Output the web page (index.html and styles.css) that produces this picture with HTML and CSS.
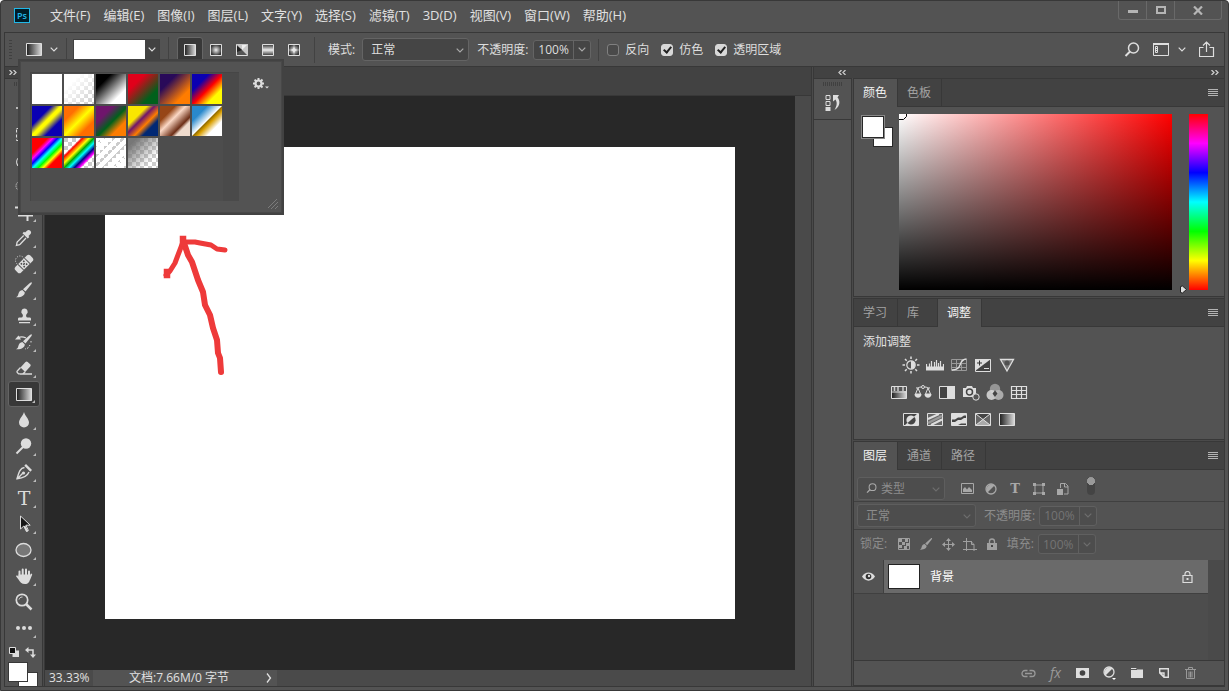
FILE: index.html
```html
<!DOCTYPE html>
<html lang="zh-CN">
<head>
<meta charset="utf-8">
<title>Photoshop</title>
<link rel="stylesheet" href="styles.css">
</head>
<body>
<svg class="defs" aria-hidden="true">
  <defs>
    <linearGradient id="g-h"><stop offset="0" stop-color="#1c1c1c"/><stop offset="1" stop-color="#dcdcdc"/></linearGradient>
    <radialGradient id="g-r"><stop offset="0" stop-color="#f0f0f0"/><stop offset="1" stop-color="#3a3a3a"/></radialGradient>
    <linearGradient id="g-m" x2="0" y2="1"><stop offset="0" stop-color="#333"/><stop offset=".5" stop-color="#eee"/><stop offset="1" stop-color="#333"/></linearGradient>
    <symbol id="chev" viewBox="0 0 8 5"><path d="M.7.7 4 4 7.3.7" fill="none" stroke="currentColor" stroke-width="1.2"/></symbol>
    <symbol id="grad" viewBox="0 0 16 13"><path d="M.5.5h15v12H.5z" fill="url(#g-h)" stroke="#dedede"/></symbol>
    <symbol id="menu" viewBox="0 0 10 8"><path d="M0 .5h10M0 2.5h10M0 4.5h10M0 6.5h10" stroke="currentColor"/></symbol>
    <symbol id="right2" viewBox="0 0 8 5"><path d="m.5 0 2.5 2.500L.5 5M4.500 0 7 2.500 4.500 5" fill="none" stroke="currentColor" stroke-width="1.300"/></symbol>
    <symbol id="halfc" viewBox="0 0 12 12"><circle cx="6" cy="6" r="5" fill="none" stroke="currentColor" stroke-width="1.300"/><path d="M2.500 9.500a5 5 0 0 1 7-7z" fill="currentColor"/></symbol>
    <symbol id="search" viewBox="0 0 16 16"><circle cx="9.500" cy="6" r="5" fill="none" stroke="currentColor" stroke-width="1.500"/><path d="M6 9.500 1.500 14" stroke="currentColor" stroke-width="2"/></symbol>
    <symbol id="brush" viewBox="0 0 18 18"><path d="M16.500 1.200c.6.300.3 1.200-.2 2L10.500 10.500 8 8.300 14 2.800c1-.9 1.800-1.700 2.500-1.600zM7.300 9l2.400 2.200c.5 3-3.500 5.500-8.700 5 2-.7 2-2 2.600-4 .6-1.700 1.900-2.900 3.700-3.200z" fill="currentColor"/></symbol>
  </defs>
</svg>
<div class="app">
  <header class="menubar">
    <span class="logo">Ps</span>
    <nav class="menus">
      <a href="#">文件(F)</a><a href="#">编辑(E)</a><a href="#">图像(I)</a><a href="#">图层(L)</a><a href="#">文字(Y)</a><a href="#">选择(S)</a><a href="#">滤镜(T)</a><a href="#">3D(D)</a><a href="#">视图(V)</a><a href="#">窗口(W)</a><a href="#">帮助(H)</a>
    </nav>
    <div class="winbtns">
      <button aria-label="最小化"><svg width="10" height="8"><path d="M0 4h10v3H0z" fill="#b5b5b5"/></svg></button>
      <button aria-label="最大化"><svg width="10" height="8"><path d="M1 1h8v6H1z" fill="none" stroke="#b5b5b5" stroke-width="2"/></svg></button>
      <button class="close" aria-label="关闭"><svg width="10" height="9"><path d="m1 .5 8 8m0-8-8 8" stroke="#b5b5b5" stroke-width="2.200"/></svg></button>
    </div>
  </header>

  <div class="frame">
  <div class="options">
    <span class="grip-v"></span>
    <button class="preset" aria-label="工具预设"><svg width="16" height="13"><use href="#grad"/></svg><svg width="8" height="5"><use href="#chev"/></svg></button>
    <div class="preview"><button class="bar" aria-label="编辑渐变"></button><button class="drop" aria-label="渐变拾色器"><svg width="8" height="5"><use href="#chev"/></svg></button></div>
    <div class="styles">
      <button class="on" aria-label="线性渐变"><svg width="12" height="12"><path d="M.5.5h11v11H.5z" fill="url(#g-h)" stroke="#dedede"/></svg></button>
      <button aria-label="径向渐变"><svg width="12" height="12"><path d="M.5.5h11v11H.5z" fill="url(#g-r)" stroke="#dedede"/></svg></button>
      <button aria-label="角度渐变"><svg width="12" height="12"><path d="M.5.5h11v11H.5z" fill="#555" stroke="#dedede"/><path d="M0 0h12v12z" fill="#c8c8c8"/><path d="M6 6V1h5z" fill="#eee"/><path d="M1 2v6l5-2z" fill="#222"/></svg></button>
      <button aria-label="对称渐变"><svg width="12" height="12"><path d="M.5.5h11v11H.5z" fill="url(#g-m)" stroke="#dedede"/></svg></button>
      <button aria-label="菱形渐变"><svg width="12" height="12"><path d="M.5.5h11v11H.5z" fill="url(#g-r)" stroke="#dedede"/><path d="M6 2.500 7 5l2.500 1L7 7 6 9.500 5 7 2.500 6 5 5z" fill="#f0f0f0"/><path d="M6 1v10M1 6h10" stroke="#ddd" opacity=".5"/></svg></button>
    </div>
    <label class="field mode">模式: <span class="select"><select><option>正常</option></select><svg width="8" height="5"><use href="#chev"/></svg></span></label>
    <label class="field opacity">不透明度: <span class="num"><input type="text" value="100%"><svg width="8" height="5"><use href="#chev"/></svg></span></label>
    <div class="checks">
      <label><input type="checkbox">反向</label>
      <label><input type="checkbox" checked>仿色</label>
      <label><input type="checkbox" checked>透明区域</label>
    </div>
    <div class="opt-right">
      <button aria-label="搜索"><svg width="16" height="16"><use href="#search"/></svg></button>
      <button class="ws" aria-label="工作区"><svg width="17" height="13"><path d="M.5.500h15v12H.500z" fill="none" stroke="currentColor"/><path d="M0 1h16" stroke="currentColor" stroke-width="2"/><path d="M2.500 3.500h2v6h-2zM2.500 5.500h2M2.500 7.500h2" fill="none" stroke="currentColor"/></svg><svg width="8" height="5"><use href="#chev"/></svg></button>
      <button aria-label="共享"><svg width="16" height="17"><path d="M4.500 6.500H.500v9h14v-9h-4M7.500 11V1.500M4 4.500l3.500-3.500L11 4.500" fill="none" stroke="currentColor" stroke-width="1.200"/></svg></button>
    </div>
  </div>

  <main class="main">
    <aside class="tools">
      <div class="strip"><svg width="8" height="5"><use href="#right2"/></svg></div>
      <div class="grip-h"></div>
      <button aria-label="移动"><svg width="18" height="18"><path d="M9 1v16M1 9h16" stroke="currentColor" stroke-width="1.500"/></svg></button>
      <button aria-label="选框"><svg width="18" height="18"><path d="M1.500 3.500h15v12h-15z" fill="none" stroke="currentColor" stroke-dasharray="3 2"/></svg></button>
      <button aria-label="套索"><svg width="18" height="18"><path d="M3 15c-4-5 1-12 8-11s6 9-2 8-7 2-5 4" fill="none" stroke="currentColor"/></svg></button>
      <button aria-label="快速选择"><svg width="18" height="18"><circle cx="6" cy="9" r="5" fill="none" stroke="currentColor" stroke-dasharray="1 1"/></svg></button>
      <button class="fly" aria-label="裁剪"><svg width="18" height="18"><path d="M4 0v12.500h14M0 4.500h12.500V18" fill="none" stroke="currentColor" stroke-width="2"/></svg></button>
      <button class="fly" aria-label="吸管"><svg width="18" height="18"><path d="M12 1.700c2-2 5.500 1 3.500 3.200L13.500 7l.800.900-1.600 1.500-5.200-5.200L9 2.800l1 .8z" fill="currentColor"/><path d="M8.700 6.500 2.600 12.600C1.500 13.600 2 15 1.500 16.300c1.200-.3 2.500.1 3.600-1L11 9" fill="none" stroke="currentColor" stroke-width="1.300"/></svg></button>
      <button class="fly" aria-label="修复画笔"><svg width="20" height="20"><circle cx="6" cy="6.500" r="4.500" fill="none" stroke="currentColor" stroke-dasharray="1 1.500"/><g transform="rotate(-45 10 10)"><rect x="-.500" y="6" width="21" height="8" rx="2.500" fill="currentColor"/><path d="M5.500 6v8M14.500 6v8" stroke="#535353"/><path d="M7.500 8h1.500M11 8h1.500M7.500 12h1.500M11 12h1.500M9 10h2" stroke="#444" stroke-width="1.500"/></g></svg></button>
      <button class="fly" aria-label="画笔"><svg width="18" height="18"><use href="#brush"/></svg></button>
      <button class="fly" aria-label="仿制图章"><svg width="18" height="18"><path d="M9.500 1.500a3.200 3.200 0 0 1 2 5.700c-.9 1-.3 3.300 1 3.300h2c1 0 1.500.5 1.500 1.500v1.500H3V12c0-1 .5-1.500 1.500-1.500h2c1.300 0 1.900-2.300 1-3.300a3.200 3.200 0 0 1 2-5.700zM4 15h11v1.300H4z" fill="currentColor"/></svg></button>
      <button class="fly" aria-label="历史记录画笔"><svg width="18" height="18"><use href="#brush"/><path d="M3 5c3-2 6-1 8 0" stroke="currentColor" stroke-width="1.300" fill="none"/><path d="M0 6.500 3.500 2.500 6 6.500z" fill="currentColor"/><path d="M16 8v2M15 12l-2 3-3 1" stroke="currentColor" fill="none" stroke-dasharray="1.500 1.500"/></svg></button>
      <button class="fly" aria-label="橡皮擦"><svg width="18" height="18"><path d="m5.500 8.500 5-5.500c.7-.8 1.500-.8 2.200-.1l2.500 2.400c.7.700.7 1.400 0 2.200l-5 5.500z" fill="currentColor"/><path d="m5.500 8.500-3 3.200c-.7.700-.7 1.300 0 2l1.200 1.200h4l2.500-2.200M5 15h12" fill="none" stroke="currentColor" stroke-width="1.300"/></svg></button>
      <button class="fly on" aria-label="渐变"><svg width="16" height="13"><use href="#grad"/></svg></button>
      <button class="fly" aria-label="模糊"><svg width="18" height="18"><path d="M9 1c.8 3.500 5 7 5 10.500a5 5 0 0 1-10 0C4 8 8.200 4.500 9 1z" fill="currentColor"/></svg></button>
      <button class="fly" aria-label="减淡"><svg width="18" height="18"><circle cx="11" cy="6.500" r="5.200" fill="currentColor"/><path d="m8 10-6.500 6.500" stroke="currentColor" stroke-width="2"/></svg></button>
      <button class="fly" aria-label="钢笔"><svg width="18" height="18"><path d="m11 1 6 6-1.700 1.700-6-6z" fill="currentColor"/><path d="M9.500 4.500C5 5 4 9 2 15.700 9 15 12.500 13 14 9M2.500 15.500l5-5" fill="none" stroke="currentColor" stroke-width="1.400"/><circle cx="8.500" cy="10" r="1.600" fill="currentColor"/></svg></button>
      <button class="fly" aria-label="文字"><span class="tee">T</span></button>
      <button class="fly" aria-label="路径选择"><svg width="18" height="18"><path d="M5.500 1v13l3.300-3 2.600 5.500 2-1-2.500-5.300h4.300z" fill="#161616" stroke="currentColor"/><path d="m9.500 11 3 5.500" stroke="currentColor" stroke-width="1.800"/></svg></button>
      <button class="fly" aria-label="椭圆"><svg width="18" height="18"><ellipse cx="8.500" cy="9" rx="7.500" ry="6.500" fill="#777" stroke="currentColor" stroke-width="1.300"/></svg></button>
      <button class="fly" aria-label="抓手"><svg width="18" height="18"><path d="M4.500 9V4.500M7.700 8V2.500M11 8V2.500M14 9V4.500" stroke="currentColor" stroke-width="2" stroke-linecap="round"/><path d="M3.500 7.500H15v4c0 3.500-2 5.500-5 5.500-3.500 0-5-2-6.500-4.500L1.200 9.600c-.5-1.100.8-1.600 1.500-.8l.8.800z" fill="currentColor"/><path d="M16.300 7.500 14.500 12" stroke="currentColor" stroke-width="1.800" stroke-linecap="round"/></svg></button>
      <button aria-label="缩放"><svg width="18" height="18"><circle cx="7" cy="7" r="5.700" fill="none" stroke="currentColor" stroke-width="1.700"/><path d="m11 11 5.500 5.500" stroke="currentColor" stroke-width="2.500"/><path d="M4 6.500C4.500 5 5.500 4 7.500 4" fill="none" stroke="currentColor"/></svg></button>
      <button class="fly" aria-label="编辑工具栏"><svg width="18" height="18"><circle cx="3" cy="9" r="2" fill="currentColor"/><circle cx="9" cy="9" r="2" fill="currentColor"/><circle cx="15" cy="9" r="2" fill="currentColor"/></svg></button>
      <div class="minis"><svg width="10" height="10"><path d="M3.500 3.500h6.500V10H3.500z" fill="#ddd"/><path d="M.500.500h6v6h-6z" fill="#111" stroke="#ddd"/></svg><svg width="11" height="11"><path d="M3 3h5v5" fill="none" stroke="#ddd" stroke-width="1.500"/><path d="M0 3 3.500 0v6zM8 11 5 7.500h6z" fill="#ddd"/></svg></div>
      <div class="colors"><i class="bg"></i><i class="fg"></i></div>
    </aside>

    <section class="doc">
      <div class="tabs-empty"></div>
      <div class="work">
        <div class="canvas">
          <div class="paper">
            <svg class="arrow" viewBox="0 0 70 146" width="70" height="146"><path d="m19 8 5 15 4 7 6 18 5 12 2 13 5 10 3 13 4 12 1 13 2 5 1 14"/><path d="m19 10-5 13-3 8-5 8-4 4M22 10h9l5 1 11 2 6 4 8 1" stroke-width="5"/><path d="M19 7v4M3 40v3" stroke-width="6.500" stroke-linecap="square"/></svg>
          </div>
        </div>
        <div class="vscroll"></div>
      </div>
      <footer class="status"><span class="zoomv">33.33%</span><span class="info">文档:7.66M/0 字节</span><button aria-label="状态选项"><svg width="6" height="10"><path d="m1 .5 3.500 4.500L1 9.500" fill="none" stroke="currentColor" stroke-width="1.300"/></svg></button></footer>
    </section>

    <aside class="dock">
      <div class="strip dockstrip"><svg class="flip" width="8" height="5"><use href="#right2"/></svg><svg width="8" height="5"><use href="#right2"/></svg></div>
      <div class="dockrow">
        <div class="iconcol"><div class="cell"><div class="grip-h"></div><button aria-label="历史记录"><svg width="16" height="18"><path d="M1 1.500h4v4H1zM1 7.500h4v4H1z" fill="none" stroke="#ddd"/><path d="M.500 13h5v4h-5z" fill="#ddd"/><path d="M8 1h6l-1.500 2.500C15 6 16 12 9.500 16 12.500 11 12 8 10.500 5.500L8 7.500z" fill="#ddd"/></svg></button></div></div>
        <div class="panels">
          <section class="panel color">
            <div class="tabs"><button class="on">颜色</button><button>色板</button><svg class="pm" width="10" height="8"><use href="#menu"/></svg></div>
            <div class="picker">
              <div class="duo"><i class="bg"></i><i class="fg"></i></div>
              <div class="sv"><svg width="8" height="6"><path d="M0 5.500h4.500L7.500 2.500V0" fill="none" stroke="#000"/></svg></div>
              <div class="hue"><svg width="9" height="9"><path d="M1.500 1.500v6l2 .5 4-3.500-4-3.500z" fill="#e0e0e0" stroke="#222"/></svg></div>
            </div>
          </section>
          <section class="panel adjust">
            <div class="tabs"><button>学习</button><button class="lib">库</button><button class="on">调整</button><svg class="pm" width="10" height="8"><use href="#menu"/></svg></div>
            <div class="adjbody">
              <p>添加调整</p>
              <div class="icons in">
                <button aria-label="亮度"><svg width="18" height="18"><circle cx="9" cy="9" r="4.200" fill="none" stroke="currentColor" stroke-width="1.200"/><path d="M9 5a4 4 0 0 1 0 8z" fill="currentColor"/><path d="M9 .500v2.500M9 15v2.500M.500 9H3M15 9h2.500M3 3l1.700 1.700M13.300 13.300 15 15M3 15l1.700-1.700M13.300 4.700 15 3" stroke="currentColor" stroke-width="1.500"/></svg></button>
                <button aria-label="色阶"><svg width="18" height="18"><path d="M0 14.500h18v-4H0z" fill="currentColor"/><path d="M.500 8v4M3.500 7.500v4M5.500 5v6M8.500 6v5M10.500 4v7M12.500 7v4M14.500 5v6M17.500 8v4" stroke="currentColor" stroke-width="1.200"/></svg></button>
                <button aria-label="曲线"><svg width="18" height="18"><path d="M1.500 3.500h15v11h-15zM6.500 3v12M11.500 3v12M1 7.500h16M1 11.500h16" fill="none" stroke="#999"/><path d="M2 14c5 0 7-2 8-5s3-6 6.500-6" fill="none" stroke="currentColor" stroke-width="1.300"/></svg></button>
                <button aria-label="曝光度"><svg width="18" height="18"><path d="M1.500 3.500h15v12h-15z" fill="#444" stroke="currentColor"/><path d="M1 3h16L1 15z" fill="currentColor"/><path d="M3 7h5M5.500 4.500v5" stroke="#333"/><path d="M10 12.500h5" stroke="currentColor"/></svg></button>
                <button aria-label="自然饱和度"><svg width="18" height="18"><path d="M2.500 3.500h13L9 15z" fill="#777" stroke="currentColor" stroke-width="1.300"/><circle cx="9" cy="7" r="2.500" fill="#505050"/></svg></button>
              </div>
              <div class="icons">
                <button aria-label="色相"><svg width="18" height="18"><path d="M1.500 3.500h15v12h-15z" fill="url(#g-h)" stroke="currentColor"/><path d="M2 9h14" stroke="currentColor"/><path d="M2 4h14v4H2z" fill="#555"/><path d="M4.500 4v4M8 4v4M13 4v4" stroke="#ccc" stroke-width="1.500"/></svg></button>
                <button aria-label="色彩平衡"><svg width="18" height="18"><path d="M2 5c3 0 3-1 5-1M11 4c2 0 2 1 5 1M4 5l-2.500 6h5zM14 5l-2.500 6h5z" fill="none" stroke="currentColor"/><circle cx="9" cy="4" r="1.500" fill="none" stroke="currentColor"/><path d="M.500 11h7c0 5-7 5-7 0zM10.500 11h7c0 5-7 5-7 0z" fill="currentColor"/></svg></button>
                <button aria-label="黑白"><svg width="18" height="18"><path d="M1.500 3.500h15v12h-15z" fill="#444" stroke="currentColor"/><path d="M9 3h8v13H9z" fill="currentColor"/></svg></button>
                <button aria-label="照片滤镜"><svg width="18" height="18"><path d="M1 5h3l1-2h5l1 2h3v9H1z" fill="currentColor"/><circle cx="7.500" cy="9" r="3" fill="#ddd" stroke="#444" stroke-width="1.500"/><circle cx="14" cy="14" r="3.200" fill="#555" stroke="currentColor"/></svg></button>
                <button aria-label="通道混合器"><svg width="18" height="18"><circle cx="9" cy="6" r="5.200" fill="#959595"/><circle cx="5.500" cy="12" r="5" fill="#ddd" opacity=".85"/><circle cx="12.500" cy="12" r="5" fill="#bbb" opacity=".85"/><path d="m9 7.500 2.500 3L9 14l-2.500-3.500z" fill="#444"/></svg></button>
                <button aria-label="颜色查找"><svg width="18" height="18"><path d="M1.500 3.500h15v12h-15zM6.500 3v13M11.500 3v13M1 7.500h16M1 11.500h16" fill="none" stroke="currentColor" stroke-width="1.200"/></svg></button>
              </div>
              <div class="icons in">
                <button aria-label="反相"><svg width="18" height="18"><path d="M1.500 3.500h15v12h-15z" fill="#444" stroke="currentColor"/><path d="M16 3v13H2z" fill="currentColor"/><path d="M5.500 13a4.300 4.300 0 0 1 7-6z" fill="currentColor"/><path d="M12.500 7a4.300 4.300 0 0 1-7 6z" fill="#444"/></svg></button>
                <button aria-label="色调分离"><svg width="18" height="18"><path d="M1.500 3.500h15v12h-15z" fill="#666" stroke="currentColor"/><path d="M2 9 13 4M5 15l11-5.500" stroke="currentColor" stroke-width="2"/><path d="M2 13 16 6" stroke="#999" stroke-width="2.500"/></svg></button>
                <button aria-label="阈值"><svg width="18" height="18"><path d="M1.500 3.500h15v12h-15z" fill="currentColor" stroke="currentColor"/><path d="M2 9.500h3L8 7.500h3l3-2h2V8h-2l-3 2H8l-3 2H2zM8 15l3-1.500h5V15z" fill="#444"/></svg></button>
                <button aria-label="可选颜色"><svg width="18" height="18"><path d="M1.500 3.500h15v12h-15z" fill="#666"/><path d="M1 3h16L9 10z" fill="#444"/><path d="m1 16 8-7 8 7z" fill="#aaa"/><path d="m2 4 14 11M16 4 2 15M1.500 3.500h15v12h-15z" fill="none" stroke="currentColor"/></svg></button>
                <button aria-label="渐变映射"><svg width="18" height="18"><path d="M1.500 3.500h15v12h-15z" fill="url(#g-h)" stroke="currentColor"/></svg></button>
              </div>
            </div>
          </section>
          <section class="panel layers">
            <div class="tabs"><button class="on">图层</button><button>通道</button><button>路径</button><svg class="pm" width="10" height="8"><use href="#menu"/></svg></div>
            <div class="lrow filter">
              <label class="select dim kind"><svg class="lens" width="11" height="11"><use href="#search"/></svg><select aria-label="类型"><option>类型</option></select><svg width="8" height="5"><use href="#chev"/></svg></label>
              <div class="ficons">
                <button aria-label="像素"><svg width="13" height="12"><path d="M.500.500h12v10H.500z" fill="none" stroke="currentColor"/><path d="M2 9V6l2-2 2 2.500L8 4l3 3v2z" fill="currentColor"/></svg></button>
                <button aria-label="调整"><svg width="12" height="12"><use href="#halfc"/></svg></button>
                <button aria-label="文字"><span class="tee small">T</span></button>
                <button aria-label="形状"><svg width="12" height="12"><path d="M2 2h8v8H2z" fill="none" stroke="currentColor"/><path d="M0 0h3v3H0zM9 0h3v3H9zM0 9h3v3H0zM9 9h3v3H9z" fill="currentColor"/></svg></button>
                <button aria-label="智能对象"><svg width="12" height="12"><path d="M3.500 5V.500h5l2.500 2.500v8H7M7.500.500V4H11" fill="none" stroke="currentColor"/><path d="M0 6h6v6H0z" fill="currentColor"/></svg></button>
              </div>
              <span class="toggle"></span>
            </div>
            <div class="lrow blend">
              <label class="select dim"><select aria-label="混合模式"><option>正常</option></select><svg width="8" height="5"><use href="#chev"/></svg></label>
              <label class="field dimfield">不透明度: <span class="num"><input type="text" value="100%"><svg width="8" height="5"><use href="#chev"/></svg></span></label>
            </div>
            <div class="lrow locks">
              <span>锁定:</span>
              <div class="licons">
                <button aria-label="透明像素"><svg width="12" height="12"><path d="M.500.500h11v11H.500z" fill="none" stroke="currentColor"/><path d="M1 1h3v3H1zM7 1h3v3H7zM4 4h3v3H4zM8 5h3v3H8zM1 7h3v3H1zM6 8h3v3H6z" fill="currentColor"/></svg></button>
                <button aria-label="图像像素"><svg width="14" height="14" viewBox="0 0 18 18"><use href="#brush" width="18" height="18"/></svg></button>
                <button aria-label="位置"><svg width="13" height="13"><path d="M6.500 1v11M1 6.500h11" stroke="currentColor"/><path d="M6.500 0 9 3H4zM6.500 13 9 10H4zM0 6.500 3 4v5zM13 6.500 10 4v5z" fill="currentColor"/></svg></button>
                <button aria-label="画板"><svg width="14" height="13"><path d="M3.500 0v13M0 3.500h8l3 3V13M0 11.500h14M8.500 3v3.500H11" fill="none" stroke="currentColor"/></svg></button>
                <button aria-label="全部"><svg width="10" height="12"><path d="M0 5h10v7H0z" fill="currentColor"/><path d="M2.500 5V3.500a2.500 2.500 0 0 1 5 0V5" fill="none" stroke="currentColor" stroke-width="1.300"/><path d="M5 7v2" stroke="#444" stroke-width="2"/></svg></button>
              </div>
              <label class="field dimfield">填充: <span class="num"><input type="text" value="100%"><svg width="8" height="5"><use href="#chev"/></svg></span></label>
            </div>
            <div class="list">
              <div class="rows">
                <div class="layer">
                  <button class="eye" aria-label="可见"><svg width="13" height="9"><path d="M0 4.500C3-1 10-1 13 4.500 10 10 3 10 0 4.500z" fill="#ddd"/><circle cx="6.500" cy="4.500" r="2.800" fill="#333"/><circle cx="7" cy="4" r="1.200" fill="#ddd"/></svg></button>
                  <div class="lbody"><span class="thumb"></span><span class="name">背景</span><svg width="11" height="12"><path d="M1 4.500h9v7H1z" fill="none" stroke="#ddd" stroke-width="1.200"/><path d="M3 4.500V3a2.500 2.500 0 0 1 5 0v1.500" fill="none" stroke="#ddd" stroke-width="1.200"/><path d="M4.500 7h2v2h-2z" fill="#ddd"/></svg></div>
                </div>
              </div>
              <div class="vscroll"></div>
            </div>
            <div class="foot">
              <button class="off" aria-label="链接"><svg width="15" height="9"><path d="M6.500 1.500H4a3 3 0 0 0 0 6h2.500M8.500 1.500H11a3 3 0 0 1 0 6H8.500M4 4.500h7" fill="none" stroke="currentColor" stroke-width="1.300"/></svg></button>
              <button class="off fx" aria-label="样式">fx</button>
              <button aria-label="蒙版"><svg width="13" height="10"><path d="M0 0h13v10H0z" fill="currentColor"/><circle cx="6.500" cy="5" r="2.800" fill="#444"/></svg></button>
              <button aria-label="调整图层"><svg width="13" height="14"><svg width="12" height="12"><use href="#halfc"/></svg><path d="M9 12h4l-2 2z" fill="#fff"/></svg></button>
              <button aria-label="组"><svg width="12" height="10"><path d="M0 0h5l1 1.500h6V10H0z" fill="currentColor"/><path d="M0 1.500h6" stroke="#535353"/></svg></button>
              <button aria-label="新建图层"><svg width="10" height="10"><path d="M.700 4V.700h8.600v8.600H5zM.700 5H5v4.300z" fill="none" stroke="currentColor" stroke-width="1.400"/></svg></button>
              <button class="off" aria-label="删除"><svg width="11" height="12"><path d="M0 2.500h11M3.500 2V.500h4V2M1.500 3v8.500h8V3M4 4.500v6M5.500 4.500v6M7 4.500v6" fill="none" stroke="currentColor"/></svg></button>
            </div>
          </section>
        </div>
      </div>
    </aside>
  </main>
  </div>

  <div class="popup">
    <div class="plist">
      <div class="swatches">
        <button class="s1" aria-label="前景到背景"></button><button class="s2" aria-label="前景到透明"></button><button class="s3" aria-label="黑白"></button><button class="s4" aria-label="红绿"></button><button class="s5" aria-label="紫橙"></button><button class="s6" aria-label="蓝红黄"></button>
        <button class="s7" aria-label="蓝黄蓝"></button><button class="s8" aria-label="橙黄橙"></button><button class="s9" aria-label="紫绿橙"></button><button class="s10" aria-label="黄紫橙蓝"></button><button class="s11" aria-label="铜色"></button><button class="s12" aria-label="铬黄"></button>
        <button class="s13" aria-label="色谱"></button><button class="s14" aria-label="透明彩虹"></button><button class="s15" aria-label="透明条纹"></button><button class="s16" aria-label="中灰密度"></button>
      </div>
      <div class="pscroll"></div>
    </div>
    <button class="gear" aria-label="选项"><svg width="16" height="12"><circle cx="5.500" cy="5.500" r="3" fill="none" stroke="#ddd" stroke-width="2.200"/><path d="M5.500 0v2M5.500 9v2M0 5.500h2M9 5.500h2M1.600 1.600l1.500 1.500M8 8l1.500 1.500M1.600 9.400l1.500-1.500M8 3l1.500-1.500" stroke="#ddd" stroke-width="2"/><path d="M12 8.500h4l-2 2z" fill="#ddd"/></svg></button>
    <svg class="resize" width="12" height="12"><path d="M1 10 10 1M4 11l7-7M8 11l3-3" stroke="#7c7c7c"/></svg>
  </div>
</div>
</body>
</html>
```
FILE: styles.css
```css
* { box-sizing: border-box; }
html, body { margin: 0; height: 100%; background: #fff; }
body { font: 12px/16px "Open Sans", "Noto Sans CJK SC", sans-serif; color: #e0e0e0; overflow: hidden; }
button, input, select { font: inherit; color: inherit; margin: 0; padding: 0; border: 0; background: none; border-radius: 0; }
button { display: flex; align-items: center; justify-content: center; }
svg { display: block; flex: none; }
.defs { position: absolute; width: 0; height: 0; }
a { color: inherit; text-decoration: none; }
p { margin: 0; }

.app { position: relative; height: 100vh; display: flex; flex-direction: column; background: #535353; border: 1px solid #383838; border-radius: 4px 4px 0 0; padding: 0 3px 3px; }

/* menu bar */
.menubar { display: flex; align-items: center; height: 31px; padding-left: 10px; }
.logo { width: 16px; height: 15px; border: 1px solid #21b8e8; background: #001d28; color: #21b8e8; font-size: 9px; font-weight: 600; line-height: 13px; text-align: center; margin-bottom: 3px; }
.menus { display: flex; gap: 13px; margin-left: 20px; font-size: 13px; line-height: 18px; white-space: nowrap; padding-bottom: 4px; }
.winbtns { display: flex; align-self: flex-start; margin: 0 3px 0 auto; border: 1px solid #696969; border-top: 0; border-radius: 0 0 3px 3px; }
.winbtns button { width: 28px; height: 18px; border-right: 1px solid #696969; }
.winbtns .close { width: 46px; border-right: 0; }

.frame { flex: 1; min-height: 0; display: flex; flex-direction: column; border: 1px solid #383838; }

/* options bar */
.options { display: flex; align-items: center; height: 34px; border-bottom: 1px solid #383838; padding: 0 9px 0 4px; color: #dedede; flex: none; }
.grip-v { width: 3px; height: 20px; background: repeating-linear-gradient(#404040 0 1px, transparent 1px 3px); }
.preset { gap: 8px; margin-left: 14px; padding-right: 8px; height: 24px; border-right: 1px solid #424242; }
.preview { display: flex; margin-left: 6px; height: 21px; border: 1px solid #404040; }
.preview .bar { width: 71px; background: #fff; }
.preview .drop { width: 14px; background: #424242; }
.styles { display: flex; margin-left: 8px; padding: 0 7px 0 8px; border: 1px solid #424242; border-width: 0 1px; }
.styles button { width: 26px; height: 26px; }
.styles .on { background: #383838; border: 1px solid #666; border-radius: 3px; }
.field { display: flex; align-items: center; white-space: nowrap; }
.mode { margin-left: 13px; gap: 7px; }
.select { position: relative; display: flex; align-items: center; height: 23px; border: 1px solid #646464; border-radius: 3px; background: #454545; }
.select select { appearance: none; width: 100%; padding-left: 8px; outline: 0; }
.select svg:last-child { position: absolute; right: 4px; top: 9px; pointer-events: none; color: #aaa; }
.mode .select { width: 107px; }
.opacity { margin-left: 8px; gap: 5px; }
.num { display: flex; align-items: center; height: 20px; border: 1px solid #646464; border-radius: 3px; background: #454545; }
.num input { width: 40px; height: 18px; padding-left: 4px; border-right: 1px solid #646464; }
.num svg { margin: 0 4px; color: #aaa; }
.checks { display: flex; gap: 12px; margin-left: 7px; padding-left: 8px; border-left: 1px solid #424242; }
.checks label { display: flex; align-items: center; gap: 6px; height: 22px; white-space: nowrap; }
.checks input { appearance: none; width: 12px; height: 12px; border: 1px solid #808080; border-radius: 3px; background: #4a4a4a; display: grid; place-items: center; }
.checks input:checked { background: #d8d8d8; border-color: #d8d8d8; }
.checks input:checked::after { content: ""; width: 3px; height: 6px; border: solid #222; border-width: 0 2px 2px 0; rotate: 40deg; margin-bottom: 2px; }
.opt-right { display: flex; align-items: center; gap: 13px; margin-left: auto; }
.ws { gap: 8px; }

/* main area */
.main { flex: 1; min-height: 0; display: flex; gap: 1px; background: #4a4a4a; }
.strip { height: 12px; background: #424242; border-bottom: 1px solid #383838; display: flex; align-items: center; padding: 0 4px; color: #ccc; flex: none; }
.tools { width: 38px; background: #535353; border-right: 1px solid #383838; flex: none; }
.grip-h { width: 20px; height: 4px; margin: 3px auto 9px; background: repeating-linear-gradient(90deg, #404040 0 1px, transparent 1px 2px); }
.tools button { position: relative; width: 32px; height: 26px; margin-left: 3px; color: #dcdcdc; }
.tools .fly::after { content: ""; position: absolute; right: 4px; bottom: 3px; border: solid transparent; border-width: 0 0 3px 3px; border-bottom-color: #bbb; }
.tools .on { background: #383838; border: 1px solid #646464; border-radius: 3px; }
.tee { font: 19px/20px "DejaVu Serif", serif; }
.tee.small { font-size: 13px; font-weight: bold; line-height: 16px; }
.minis { display: flex; justify-content: space-between; padding: 6px 6px 4px 4px; }
.colors { display: grid; margin-left: 3px; width: 30px; }
.colors i { grid-area: 1 / 1; width: 20px; height: 20px; background: #fff; border: 1px solid #383838; }
.colors .bg { margin: 10px 0 0 10px; height: 14px; border-bottom: 0; }

.doc { flex: 1; min-width: 0; display: flex; flex-direction: column; border: 1px solid #383838; border-width: 0 1px; }
.tabs-empty { height: 29px; background: #424242; border-bottom: 1px solid #383838; flex: none; }
.work { flex: 1; min-height: 0; display: flex; }
.canvas { flex: 1; min-width: 0; background: #282828; display: grid; place-items: center; overflow: hidden; }
.paper { position: relative; width: 84%; aspect-ratio: 4 / 3; background: #fff; }
.arrow { position: absolute; left: 59px; top: 85px; overflow: visible; fill: none; stroke: #ee3a3a; stroke-width: 6; stroke-linecap: round; stroke-linejoin: round; }
.vscroll { width: 16px; background: #4a4a4a; flex: none; }
.status { display: flex; align-items: center; height: 16px; background: #4a4a4a; flex: none; white-space: nowrap; }
.zoomv { width: 48px; padding-left: 4px; }
.info { width: 168px; background: #535353; padding-left: 36px; }
.status button { width: 16px; height: 16px; background: #535353; }

/* dock */
.dock { width: 411px; flex: none; display: flex; flex-direction: column; border-left: 1px solid #383838; }
.dockstrip { padding: 0 5px 0 24px; justify-content: space-between; border-bottom: 0; height: 11px; }
.flip { rotate: 180deg; }
.dockrow { flex: 1; min-height: 0; display: flex; gap: 1px; }
.iconcol { width: 38px; background: #535353; border: 1px solid #383838; border-width: 1px 1px 0 0; }
.cell { display: flow-root; height: 41px; border-bottom: 1px solid #383838; }
.cell button { margin: 0 auto; }
.cell .grip-h { margin-bottom: 8px; }
.panels { flex: 1; min-width: 0; display: flex; flex-direction: column; gap: 1px; }
.panel { background: #535353; border: 1px solid #383838; border-right: 0; display: flex; flex-direction: column; }
.tabs { display: flex; height: 28px; background: #424242; border-bottom: 1px solid #383838; flex: none; }
.tabs button { height: 28px; padding: 0 10px 0 9px; border-right: 1px solid #383838; color: #a2a2a2; }
.tabs .on { background: #535353; color: #f2f2f2; }
.tabs .lib { padding: 0 18px 0 9px; }
.pm { margin: 10px 6px 0 auto; color: #b4b4b4; }
.picker { display: flex; padding: 7px 16px 6px 8px; height: 189px; }
.duo { display: grid; width: 37px; align-content: start; padding-top: 2px; }
.duo i { grid-area: 1 / 1; width: 22px; height: 22px; background: #fff; border: 1px solid #282828; outline: 1px solid #888; }
.duo .bg { width: 20px; height: 20px; margin: 11px 0 0 11px; outline: 0; }
.sv { flex: 1; background: linear-gradient(transparent, #000), linear-gradient(90deg, #fff, #f00); }
.hue { position: relative; width: 19px; margin-left: 17px; background: linear-gradient(#f00, #f0f, #00f, #0ff, #0f0, #ff0, #f00); }
.hue svg { position: absolute; left: -10px; bottom: -4px; }
.adjbody { padding: 7px 9px 7px; }
.adjbody p { padding-bottom: 1px; }
.icons { display: flex; height: 27px; padding-left: 24px; }
.icons.in { padding-left: 36px; }
.icons button { width: 24px; color: #dedede; }
.layers { flex: 1; min-height: 0; }
.lrow { display: flex; align-items: center; height: 28px; padding-left: 3px; border-bottom: 1px solid #404040; flex: none; color: #8c8c8c; }
.filter { height: 32px; padding-top: 6px; }
.select.dim { background: #4d4d4d; border-color: #5e5e5e; }
.select.dim svg:last-child, .dimfield .num svg { color: #6e6e6e; }
.kind { width: 88px; padding-left: 8px; }
.kind select { padding-left: 4px; }
.lens { color: #aaa; }
.ficons { display: flex; margin-left: 10px; color: #a8a8a8; }
.ficons button { width: 24px; height: 18px; }
.toggle { width: 8px; height: 18px; margin: 0 0 6px 12px; border-radius: 4px; background: radial-gradient(circle at 4px 4px, #999 0 4px, #444 4px); }
.blend .select { width: 119px; }
.dimfield { gap: 4px; }
.blend .dimfield { margin-left: 8px; }
.dimfield .num { background: #4d4d4d; border-color: #606060; color: #747474; }
.dimfield .num input { border-color: #606060; }
.locks { height: 30px; border: 0; padding: 0 0 2px 6px; }
.licons { display: flex; margin-left: 6px; color: #a0a0a0; }
.licons button { width: 22px; height: 20px; }
.locks .dimfield { margin-left: auto; margin-right: 128px; }
.list { flex: 1; min-height: 0; display: flex; background: #4d4d4d; }
.rows { flex: 1; }
.layer { display: flex; height: 34px; border-bottom: 1px solid #404040; }
.eye { width: 30px; border-right: 1px solid #404040; background: #535353; }
.lbody { flex: 1; display: flex; align-items: center; background: #6a6a6a; padding: 0 15px 0 4px; }
.thumb { width: 32px; height: 25px; background: #fff; border: 1px solid #222; }
.name { flex: 1; padding-left: 10px; color: #fff; }
.foot { display: flex; justify-content: flex-end; height: 25px; border-top: 1px solid #383838; padding-right: 20px; flex: none; color: #dedede; }
.foot button { width: 27px; }
.foot .off { color: #999; }
.foot .fx { font: italic 14px/16px "Open Sans", sans-serif; }

/* gradient picker */
.popup { position: absolute; left: 17px; top: 58px; display: flex; align-items: flex-start; width: 266px; height: 156px; padding: 11px 12px 0 10px; background: #535353; border: 2px solid #424242; box-shadow: inset 0 0 0 1px #484848; }
.plist { display: flex; height: 129px; width: 209px; background: #4d4d4d; border: 1px solid #464646; border-width: 1px 0 0 1px; }
.swatches { flex: 1; display: grid; grid-template-columns: repeat(6, 30px); grid-auto-rows: 30px; align-content: start; gap: 2px; padding: 1px; }
.pscroll { width: 16px; background: #4a4a4a; }
.gear { margin: 6px 0 0 14px; }
.resize { position: absolute; right: 3px; bottom: 3px; }
.swatches { --check: repeating-conic-gradient(#fff 0 25%, #ccc 0 50%) 0 0 / 8px 8px; }
.s1 { background: #fff; }
.s2 { background: linear-gradient(135deg, #fff 25%, transparent), var(--check); }
.s3 { background: linear-gradient(135deg, #000 25%, #fff 75%); }
.s4 { background: linear-gradient(135deg, #e1001a 28%, #00601b 75%); }
.s5 { background: linear-gradient(135deg, #290a59 28%, #ff7c00 75%); }
.s6 { background: linear-gradient(135deg, #0a00b2 28%, #f00 52%, #fffc00 75%); }
.s7 { background: linear-gradient(135deg, #0a00b2 32%, #fffc00 48% 54%, #0a00b2 72%); }
.s8 { background: linear-gradient(135deg, #ff6e02 25%, #ff0 50%, #ff6d00 75%); }
.s9 { background: linear-gradient(135deg, #6f156c 28%, #00601b 53%, #fd7c00 75%); }
.s10 { background: linear-gradient(135deg, #f9e600 32%, #6f156c 44%, #fd7c00 60%, #002874 74%); }
.s11 { background: linear-gradient(135deg, #974616 25%, #fbd8c5 43%, #6c2e16 68%, #efdbcd 76%); }
.s12 { background: linear-gradient(135deg, #2989cc 25%, #fff 49%, #906a00 51%, #d99f00 58%, #fff 75%); }
.s13 { background: linear-gradient(135deg, #f00 26%, #f0f 35%, #00f 43%, #0ff 51%, #0f0 60%, #ff0 68%, #f00 76%); }
.s14 { background: linear-gradient(135deg, transparent 27%, #f00 31%, #ff0 42%, #0a0 50%, #0ff 58%, #008 67%, #f0f 75%, transparent 79%), var(--check); }
.s15 { background: repeating-linear-gradient(135deg, #fff 0 4px, transparent 4px 7px), var(--check); }
.s16 { background: linear-gradient(135deg, #777 15%, transparent 75%), var(--check); }
```
